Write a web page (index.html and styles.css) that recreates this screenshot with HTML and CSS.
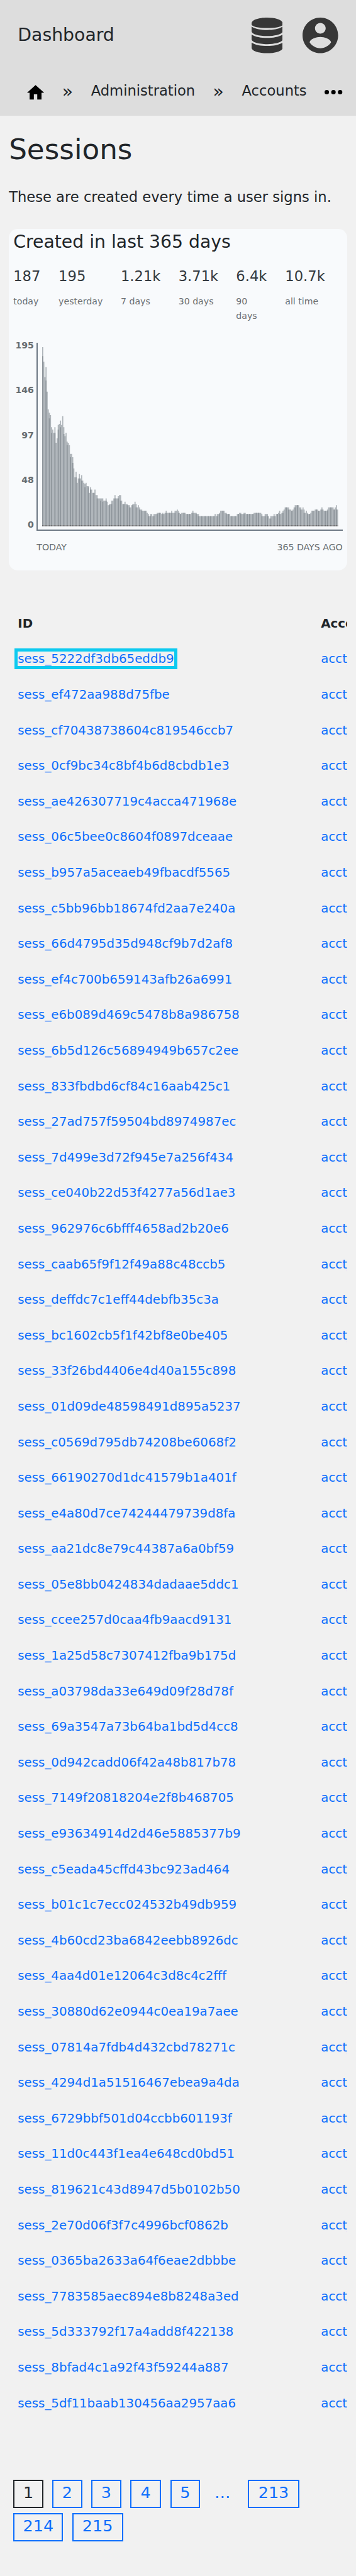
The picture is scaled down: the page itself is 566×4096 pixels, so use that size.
FILE: index.html
```
<!DOCTYPE html>
<html lang="en">
<head>
<meta charset="utf-8">
<title>Sessions</title>
<link rel="stylesheet" href="styles.css">
</head>
<body>
<header class="top">
  <div class="bar">
    <span class="brand">Dashboard</span>
    <svg class="db" viewBox="0 0 56 64"><path d="M28 0C43 0 56 4 56 10.500V13C54 16.500 43 18.700 28 18.700S2 16.500 0 13V10.500C0 4 13 0 28 0zM0 16C7 20.500 17 22.200 28 22.200S49 20.500 56 16V24.500C56 29.500 43 33.200 28 33.200S0 29.500 0 24.500zM0 30.600C7 35 17 36.600 28 36.600S49 35 56 30.600V39C56 44 43 47.700 28 47.700S0 44 0 39zM0 45C7 49.500 17 51 28 51S49 49.500 56 45V54C56 60 43 64 28 64S0 60 0 54z"/></svg>
    <svg class="user" viewBox="2 2 20 20"><path d="M12 2C6.480 2 2 6.480 2 12s4.480 10 10 10 10-4.480 10-10S17.520 2 12 2zm0 3c1.660 0 3 1.340 3 3s-1.340 3-3 3-3-1.340-3-3 1.340-3 3-3zm0 14.200c-2.500 0-4.710-1.280-6-3.220.030-1.990 4-3.080 6-3.080 1.990 0 5.970 1.090 6 3.080-1.290 1.940-3.500 3.220-6 3.220z"/></svg>
  </div>
  <nav class="crumbs">
    <svg class="home" viewBox="2 3 20 17"><path d="M10 20v-6h4v6h5v-8h3L12 3 2 12h3v8z"/></svg>
    <span class="sep">»</span>
    <span class="crumb admin">Administration</span>
    <span class="sep">»</span>
    <span class="crumb">Accounts</span>
    <svg class="more" viewBox="0 0 32 8"><circle cx="4" cy="4" r="4"/><circle cx="16" cy="4" r="4"/><circle cx="28" cy="4" r="4"/></svg>
  </nav>
</header>
<main>
  <h1>Sessions</h1>
  <p class="intro">These are created every time a user signs in.</p>
  <section class="card">
    <h2>Created in last 365 days</h2>
    <div class="stats">
      <div><b>187</b><small>today</small></div>
      <div><b>195</b><small>yesterday</small></div>
      <div><b>1.21k</b><small>7 days</small></div>
      <div><b>3.71k</b><small>30 days</small></div>
      <div><b>6.4k</b><small>90<br>days</small></div>
      <div><b>10.7k</b><small>all time</small></div>
    </div>
    <div class="chart">
      <div class="ylabels"><span>195</span><span>146</span><span>97</span><span>48</span><span>0</span></div>
      <div class="plot">
        <svg viewBox="0 0 532 322" preserveAspectRatio="none"><path id="light" fill="#b0b6bb"/><path id="dark" fill="#8f969c"/><path fill="#999899" d="M0 320h532v2H0z"/><path id="foot" fill="#65696d"/></svg>
      </div>
    </div>
    <div class="xlabels"><span>TODAY</span><span>365 DAYS AGO</span></div>
  </section>
  <div class="scroll">
  <table>
    <thead><tr><th>ID</th><th>Account</th></tr></thead>
    <tbody>
    <tr><td><a class="focus">sess_5222df3db65eddb9</a></td><td><a>acct_</a></td></tr>
    <tr><td><a>sess_ef472aa988d75fbe</a></td><td><a>acct_</a></td></tr>
    <tr><td><a>sess_cf70438738604c819546ccb7</a></td><td><a>acct_</a></td></tr>
    <tr><td><a>sess_0cf9bc34c8bf4b6d8cbdb1e3</a></td><td><a>acct_</a></td></tr>
    <tr><td><a>sess_ae426307719c4acca471968e</a></td><td><a>acct_</a></td></tr>
    <tr><td><a>sess_06c5bee0c8604f0897dceaae</a></td><td><a>acct_</a></td></tr>
    <tr><td><a>sess_b957a5aceaeb49fbacdf5565</a></td><td><a>acct_</a></td></tr>
    <tr><td><a>sess_c5bb96bb18674fd2aa7e240a</a></td><td><a>acct_</a></td></tr>
    <tr><td><a>sess_66d4795d35d948cf9b7d2af8</a></td><td><a>acct_</a></td></tr>
    <tr><td><a>sess_ef4c700b659143afb26a6991</a></td><td><a>acct_</a></td></tr>
    <tr><td><a>sess_e6b089d469c5478b8a986758</a></td><td><a>acct_</a></td></tr>
    <tr><td><a>sess_6b5d126c56894949b657c2ee</a></td><td><a>acct_</a></td></tr>
    <tr><td><a>sess_833fbdbd6cf84c16aab425c1</a></td><td><a>acct_</a></td></tr>
    <tr><td><a>sess_27ad757f59504bd8974987ec</a></td><td><a>acct_</a></td></tr>
    <tr><td><a>sess_7d499e3d72f945e7a256f434</a></td><td><a>acct_</a></td></tr>
    <tr><td><a>sess_ce040b22d53f4277a56d1ae3</a></td><td><a>acct_</a></td></tr>
    <tr><td><a>sess_962976c6bfff4658ad2b20e6</a></td><td><a>acct_</a></td></tr>
    <tr><td><a>sess_caab65f9f12f49a88c48ccb5</a></td><td><a>acct_</a></td></tr>
    <tr><td><a>sess_deffdc7c1eff44debfb35c3a</a></td><td><a>acct_</a></td></tr>
    <tr><td><a>sess_bc1602cb5f1f42bf8e0be405</a></td><td><a>acct_</a></td></tr>
    <tr><td><a>sess_33f26bd4406e4d40a155c898</a></td><td><a>acct_</a></td></tr>
    <tr><td><a>sess_01d09de48598491d895a5237</a></td><td><a>acct_</a></td></tr>
    <tr><td><a>sess_c0569d795db74208be6068f2</a></td><td><a>acct_</a></td></tr>
    <tr><td><a>sess_66190270d1dc41579b1a401f</a></td><td><a>acct_</a></td></tr>
    <tr><td><a>sess_e4a80d7ce74244479739d8fa</a></td><td><a>acct_</a></td></tr>
    <tr><td><a>sess_aa21dc8e79c44387a6a0bf59</a></td><td><a>acct_</a></td></tr>
    <tr><td><a>sess_05e8bb0424834dadaae5ddc1</a></td><td><a>acct_</a></td></tr>
    <tr><td><a>sess_ccee257d0caa4fb9aacd9131</a></td><td><a>acct_</a></td></tr>
    <tr><td><a>sess_1a25d58c7307412fba9b175d</a></td><td><a>acct_</a></td></tr>
    <tr><td><a>sess_a03798da33e649d09f28d78f</a></td><td><a>acct_</a></td></tr>
    <tr><td><a>sess_69a3547a73b64ba1bd5d4cc8</a></td><td><a>acct_</a></td></tr>
    <tr><td><a>sess_0d942cadd06f42a48b817b78</a></td><td><a>acct_</a></td></tr>
    <tr><td><a>sess_7149f20818204e2f8b468705</a></td><td><a>acct_</a></td></tr>
    <tr><td><a>sess_e93634914d2d46e5885377b9</a></td><td><a>acct_</a></td></tr>
    <tr><td><a>sess_c5eada45cffd43bc923ad464</a></td><td><a>acct_</a></td></tr>
    <tr><td><a>sess_b01c1c7ecc024532b49db959</a></td><td><a>acct_</a></td></tr>
    <tr><td><a>sess_4b60cd23ba6842eebb8926dc</a></td><td><a>acct_</a></td></tr>
    <tr><td><a>sess_4aa4d01e12064c3d8c4c2fff</a></td><td><a>acct_</a></td></tr>
    <tr><td><a>sess_30880d62e0944c0ea19a7aee</a></td><td><a>acct_</a></td></tr>
    <tr><td><a>sess_07814a7fdb4d432cbd78271c</a></td><td><a>acct_</a></td></tr>
    <tr><td><a>sess_4294d1a51516467ebea9a4da</a></td><td><a>acct_</a></td></tr>
    <tr><td><a>sess_6729bbf501d04ccbb601193f</a></td><td><a>acct_</a></td></tr>
    <tr><td><a>sess_11d0c443f1ea4e648cd0bd51</a></td><td><a>acct_</a></td></tr>
    <tr><td><a>sess_819621c43d8947d5b0102b50</a></td><td><a>acct_</a></td></tr>
    <tr><td><a>sess_2e70d06f3f7c4996bcf0862b</a></td><td><a>acct_</a></td></tr>
    <tr><td><a>sess_0365ba2633a64f6eae2dbbbe</a></td><td><a>acct_</a></td></tr>
    <tr><td><a>sess_7783585aec894e8b8248a3ed</a></td><td><a>acct_</a></td></tr>
    <tr><td><a>sess_5d333792f17a4add8f422138</a></td><td><a>acct_</a></td></tr>
    <tr><td><a>sess_8bfad4c1a92f43f59244a887</a></td><td><a>acct_</a></td></tr>
    <tr><td><a>sess_5df11baab130456aa2957aa6</a></td><td><a>acct_</a></td></tr>
    </tbody>
  </table>
  </div>
  <nav class="pages">
    <span class="page current">1</span><a class="page">2</a><a class="page">3</a><a class="page four">4</a><a class="page">5</a><span class="dots">…</span><a class="page wide">213</a><a class="page">214</a><a class="page wide">215</a>
  </nav>
</main>
<script src="chart.js"></script>
</body>
</html>
```
FILE: styles.css
```
/* 1rem is ten layout units */
html { font-size: 8.84375px; }
* { box-sizing: border-box; }
body {
  margin: 0;
  background: #f1f1f1;
  color: #212529;
  font-family: "DejaVu Sans", sans-serif;
  font-size: 2.56rem;
  line-height: 1.6;
  overflow-x: hidden;
}
svg { display: block; flex: none; }
h1, h2, p { margin: 0; font-weight: 400; }
.top { height: 20.8rem; background: #ddd; }
.bar { display: flex; align-items: center; height: 12.8rem; padding: 0 3.2rem; }
.brand { font-size: 3.2rem; line-height: 4rem; margin: 0 auto 0.2rem 0; }
.db { width: 5.6rem; height: 6.4rem; fill: #373737; margin-right: 3.6rem; }
.user { width: 6.4rem; height: 6.4rem; fill: #373737; }
.crumbs { display: flex; align-items: center; height: 7rem; padding: 0 2.4rem 0 4.9rem; white-space: nowrap; }
.home { width: 3.06rem; height: 2.65rem; margin: 0.6rem 3.2rem 0 0; }
.sep { width: 2rem; font-size: 3.2rem; line-height: 4rem; margin-top: 0.3rem; }
.crumb { margin-left: 3.2rem; }
.admin { margin-right: 3.2rem; }
.more { width: 3.2rem; height: 0.8rem; margin: 0.6rem 0 0 auto; }
main { padding: 0 1.6rem; }
h1 { font-size: 5.12rem; line-height: 6.4rem; padding-top: 3rem; height: 11.5rem; }
.intro { line-height: 4rem; padding-top: 1.2rem; height: 8.9rem; }
.card { height: 61.4rem; border-radius: 1.6rem; background: #f8fafc; padding: 0.2rem 0.8rem 0; }
h2 { font-size: 3.2rem; line-height: 4.1rem; padding-top: 0.1rem; }
.stats { display: grid; grid-template-columns: 8.13rem 11.18rem 10.37rem 10.37rem 8.81rem 1fr; height: 15.6rem; padding-top: 2.2rem; color: #343a40; }
.stats b, .stats small { display: block; font-weight: 400; }
.stats b { line-height: 3.8rem; margin-bottom: 1.35rem; }
.stats small { font-size: 1.6rem; line-height: 2.6rem; color: #6c7073; }
.chart { display: flex; height: 34.2rem; }
.ylabels { width: 3.7rem; display: flex; flex-direction: column; justify-content: space-between; text-align: right; font-size: 1.6rem; line-height: 2rem; font-weight: 700; color: #666c70; }
.plot { margin-left: 0.5rem; width: 55rem; height: 33.8rem; margin-top: 0.4rem; border-left: 2px solid #6c7783; border-bottom: 2px solid #6c7783; padding: 0.8rem 0 0 0.8rem; }
.plot svg { width: 53.2rem; height: 32.2rem; }
.xlabels { display: flex; justify-content: space-between; margin: 1.7rem 0 0 4.2rem; width: 55rem; font-size: 1.6rem; line-height: 2.6rem; color: #666c70; }
.scroll { width: 60.8rem; overflow: hidden; padding-top: 6.3rem; height: 341.7rem; }
table { table-layout: fixed; width: 90rem; border-collapse: collapse; font-size: 2.24rem; line-height: 2.6rem; }
th, td { height: 6.4rem; padding: 0 1.6rem; text-align: left; vertical-align: middle; white-space: nowrap; }
th:first-child { width: 54.5rem; }
a { color: #0d6efd; }
.focus { outline: 5px solid #0dcaf0; }
.pages { display: flex; flex-wrap: wrap; align-content: flex-start; gap: 0.9rem 1.6rem; padding: 1.6rem 0 0 0.8rem; font-size: 2.88rem; }
.page { height: 5.05rem; line-height: 4.15rem; border: 2px solid #0d6efd; padding: 0 1.5rem; min-width: 5.4rem; text-align: center; }
.four { min-width: 5.6rem; }
.wide { min-width: 9.2rem; }
.current { border-color: #212529; }
.dots { width: 5.4rem; line-height: 4.6rem; padding-right: 0.6rem; text-align: center; color: #0d6efd; }
```
FILE: chart.js
```
// Column heights, as "height" or "heightxcount", two units wide each.
const runs = "322 296 268 286 242 210 204 200 178 174 168 178 150 158 182 184 190 182 198 178 162 168 152 150 146 130x2 124 104 88 98 78 86 94 86 92 82 78 76 78 72x2 60 70 66 60x2 66 56x2 50x5 46x2 50 44 38 40x2 46x2 50 56 50x2 54 56x2 46 40x2 44 40x2 38x2 34 38 40x2 44 40 34 38 34 30x2 28x4 24 22 18 22x2 18 22x3 24x4 22 24 22 24 28 24x4 28 24x2 28x2 30 28 24 22 24x4 22x5 24 28 24x3 22x2 18x14 22 18 22x2 24 28x4 24x2 22x3 18x6 22x2 24x2 22x2 24x2 22x7 24x7 22 18x2 22x3 18 14 18x3 22 18 22x2 24 28 22 24 28 30 34x4 30x2 28 30 34 38x4 34x2 30 34 30 24 28 24 22x2 24 28x3 30x3 28x2 30 34 30 28x3 30 34x5 30 34 38 30";
const h = runs.split(" ").flatMap(r => {
  const [v, n] = r.split("x");
  return Array(Number(n || 1)).fill(Number(v));
});
// Heights of the columns where two days overlap.
const overlap = {0: 306, 3: 262, 6: 194, 8: 168, 11: 168, 14: 174, 16: 178, 19: 166, 22: 146, 25: 124, 27: 114, 30: 88, 33: 86, 35: 82, 38: 70, 41: 70, 43: 66, 52: 46, 54: 44, 57: 46, 265: 28};
let light = "", dark = "", foot = "";
h.forEach((v, i) => { light += `M${i * 2} 322v${-v}h2v${v}z`; });
for (let k = 0; k < 99; k++) {
  const i = Math.min(h.length - 1, Math.floor(k * 2.696 + 0.79));
  const v = overlap[i] || Math.min(h[i - 1], h[i], h[i + 1] || 99);
  dark += `M${i * 2} 322v${-v}h2v${v}z`;
  foot += `M${i * 2} 322v-2h2v2z`;
}
document.getElementById("light").setAttribute("d", light);
document.getElementById("dark").setAttribute("d", dark);
document.getElementById("foot").setAttribute("d", foot);
```
